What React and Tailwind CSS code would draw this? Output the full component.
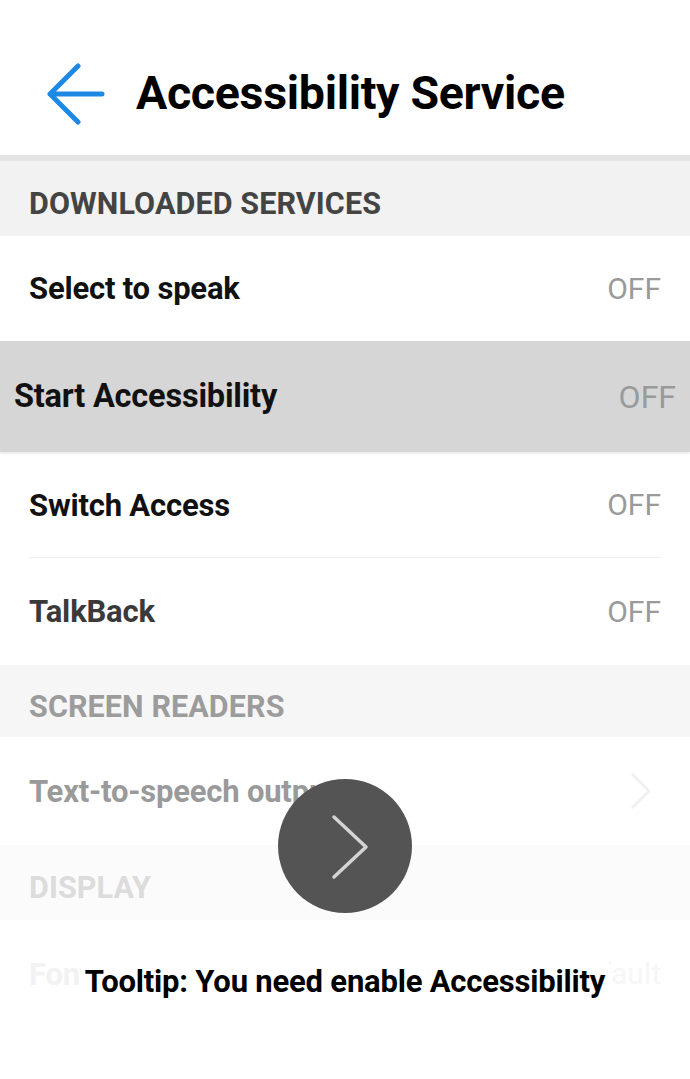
import React from "react";

function Row({ label, right = "OFF", labelCls = "text-[#111]", rightCls = "text-[#9a9a9a]", h = "h-[105px]", divider = false, chevron = false }) {
  return (
    <div className={`bg-white ${h} px-[29px] relative`}>
      <div className="flex h-full items-center justify-between">
        <span className={`text-[31px] font-bold leading-none tracking-[-0.2px] ${labelCls}`}>{label}</span>
        {chevron ? (
          <svg width="24" height="38" viewBox="0 0 24 38" className="mr-[8px]">
            <path d="M3 2 L20 19 L3 36" fill="none" stroke="#f0f0f0" strokeWidth="2.5" />
          </svg>
        ) : (
          <span className={`text-[30px] font-normal leading-none ${rightCls}`}>{right}</span>
        )}
      </div>
      {divider && <div className="absolute bottom-0 left-[29px] right-[29px] h-[1px] bg-[#efefef]" />}
    </div>
  );
}

function Section({ label, cls, bg, h }) {
  return (
    <div className={`${bg} ${h} px-[29px] pt-[12px] flex items-center`}>
      <span className={`text-[30.5px] font-bold leading-none tracking-[0.1px] ${cls}`}>{label}</span>
    </div>
  );
}

export default function App() {
  return (
    <div className="relative w-[690px] h-[1079px] overflow-hidden bg-white" style={{ fontFamily: "Roboto, 'Noto Sans', sans-serif" }}>
      <div className="h-[155px] flex items-center pl-[46px] pt-[32px]">
        <svg width="60" height="62" viewBox="0 0 60 62">
          <path d="M32 3 L4 31 L32 59 M4 31 L56 31" fill="none" stroke="#1e88e5" strokeWidth="5" strokeLinecap="round" strokeLinejoin="round" />
        </svg>
        <h1 className="ml-[30px] text-[46.5px] font-bold leading-none text-black tracking-[-0.3px]">Accessibility Service</h1>
      </div>
      <div className="h-[6px] bg-[#e4e4e4]" />
      <Section label="DOWNLOADED SERVICES" cls="text-[#444]" bg="bg-[#f2f2f2]" h="h-[75px]" />
      <Row label="Select to speak" h="h-[105px]" />
      <div className="h-[111px] bg-[#d6d6d6] px-[14px] flex items-center justify-between shadow-[0_2px_2px_rgba(0,0,0,0.08)] relative z-10">
        <span className="text-[32.5px] font-bold leading-none text-[#111] tracking-[-0.2px]">Start Accessibility</span>
        <span className="text-[32px] font-normal leading-none text-[#9a9a9a]">OFF</span>
      </div>
      <Row label="Switch Access" h="h-[106px]" divider />
      <Row label="TalkBack" labelCls="text-[#3a3a3a]" h="h-[107px]" />
      <Section label="SCREEN READERS" cls="text-[#9c9c9c]" bg="bg-[#f6f6f6]" h="h-[72px]" />
      <Row label="Text-to-speech output" labelCls="text-[#9a9a9a]" h="h-[108px]" chevron />
      <Section label="DISPLAY" cls="text-[#dcdcdc]" bg="bg-[#fbfbfb]" h="h-[75px]" />
      <Row label="Font size" labelCls="text-[#f2f2f2]" right="Default" rightCls="text-[#f6f6f6]" h="h-[108px]" />

      <div className="absolute left-[278px] top-[779px] w-[134px] h-[134px] rounded-full bg-[#545454] flex items-center justify-center">
        <svg width="134" height="134" viewBox="0 0 134 134">
          <path d="M56 38 L88 68 L56 98" fill="none" stroke="#d4d4d4" strokeWidth="3.5" strokeLinecap="round" strokeLinejoin="round" />
        </svg>
      </div>
      <div className="absolute left-0 right-0 top-[962px] flex justify-center">
        <span className="bg-white px-[4px] py-[4px] text-[31px] font-bold leading-none text-black tracking-[-0.2px]">Tooltip: You need enable Accessibility</span>
      </div>
    </div>
  );
}
